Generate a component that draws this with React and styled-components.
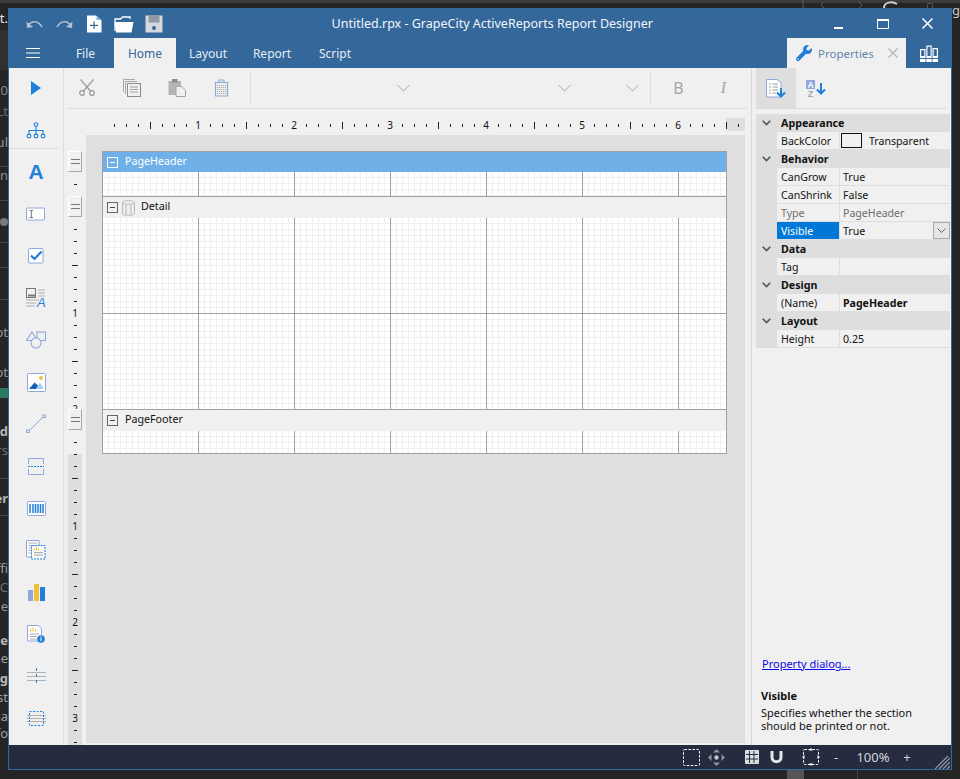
import React from 'react';
import styled, { createGlobalStyle } from 'styled-components';
import { FaWrench } from 'react-icons/fa';

const UI_FONT = '"Noto Sans", "Open Sans", sans-serif';

const Global = createGlobalStyle`
  html, body { margin: 0; padding: 0; background: #252525; }
  body { font-family: ${UI_FONT}; font-size: 11px; color: #111; }
  * { box-sizing: border-box; }
`;

const Desktop = styled.div`
  position: relative;
  width: 960px;
  height: 779px;
  overflow: hidden;
  padding: 8px;
  background: #252525;
`;

const BackdropStrip = styled.div`
  position: absolute;
  left: 0;
  right: 0;
  top: 0;
  height: 3px;
  background: #3b3b3b;
`;

const BackdropText = styled.span`
  position: absolute;
  top: ${p => p.$y}px;
  ${p => (p.$right ? 'left: 952px;' : 'right: 952px;')}
  font-size: 13px;
  line-height: 14px;
  font-weight: ${p => (p.$bold ? 700 : 400)};
  color: ${p => p.$color || '#8f8f8f'};
  white-space: nowrap;
`;

const BackdropHelp = styled.span`
  position: absolute;
  left: 0;
  top: 218px;
  width: 8px;
  height: 8px;
  border-radius: 50%;
  background: #7a7a7a;
`;

const BackdropLine = styled.i`
  position: absolute;
  left: 0;
  width: 8px;
  top: ${p => p.$y}px;
  height: ${p => p.$h || 1}px;
  background: ${p => p.$color || '#454545'};
`;

const BackdropBlock = styled.i`
  position: absolute;
  top: 770px;
  left: ${p => p.$x}px;
  width: ${p => p.$w}px;
  height: 9px;
  background: ${p => p.$color};
`;

const BackdropIcon = styled.svg`
  position: absolute;
  left: 800px;
  top: 0;
`;

const Window = styled.div`
  position: relative;
  display: flex;
  flex-direction: column;
  width: 944px;
  height: 762px;
  border: 1px solid #2c6aa5;
  background: #f0f0f0;
`;

const TitleBar = styled.div`
  display: flex;
  align-items: center;
  height: 29px;
  background: #34679a;
  color: #fff;
`;

const QuickGroup = styled.div`
  display: flex;
  align-items: center;
  width: 160px;
  padding-left: 11px;
`;

const QuickButton = styled.span`
  display: flex;
  justify-content: center;
  width: 30px;
`;

const Title = styled.div`
  flex: 1;
  text-align: center;
  font-size: 12.5px;
  padding-right: 1px;
  color: #f2f6fa;
`;

const WindowControls = styled.div`
  display: flex;
  padding-right: 1px;
`;

const WindowButton = styled.span`
  display: flex;
  align-items: center;
  justify-content: center;
  width: 44.5px;
  height: 29px;
`;

const TabRow = styled.div`
  display: flex;
  align-items: flex-end;
  height: 30px;
  background: #34679a;
`;

const MenuButton = styled.span`
  display: flex;
  align-items: center;
  justify-content: center;
  width: 48px;
  height: 30px;
`;

const Tab = styled.span`
  display: flex;
  align-items: center;
  justify-content: center;
  width: ${p => p.$w}px;
  height: 30px;
  font-size: 12px;
  color: ${p => (p.$active ? '#34679a' : '#e6edf4')};
  background: ${p => (p.$active ? '#f0f0f0' : 'transparent')};
`;

const TabSpacer = styled.span`
  flex: 1;
`;

const PropertiesTab = styled.span`
  flex: none;
  display: flex;
  align-items: center;
  width: 119px;
  height: 30px;
  padding-left: 9px;
  background: #f0f0f0;
  color: #5f87ae;
  font-size: 11.5px;
  gap: 6px;
`;

const TabClose = styled.svg`
  flex: none;
  margin-left: 8px;
`;

const ExplorerTab = styled.span`
  display: flex;
  align-items: center;
  justify-content: center;
  width: 45px;
  height: 30px;
`;

const Main = styled.div`
  flex: 1;
  display: flex;
  min-height: 0;
`;

const Toolbox = styled.div`
  flex: none;
  width: 55px;
  border-right: 1px solid #dcdcdc;
  display: flex;
  flex-direction: column;
  padding-top: 0;
  overflow: hidden;
`;

const ToolButton = styled.span`
  flex: none;
  display: flex;
  align-items: center;
  justify-content: center;
  height: 42px;
  width: 54px;

  &:first-child {
    margin-top: -1px;
  }
`;

const ToolLetter = styled.span`
  font-family: "Liberation Sans", sans-serif;
  font-weight: 700;
  font-size: 21px;
  line-height: 21px;
  color: #1e7fdc;
  margin-top: -1px;
`;

const ToolDivider = styled.hr`
  flex: none;
  width: 50px;
  height: 1px;
  border: 0;
  margin: -3px 0 2px 0;
  background: #dcdcdc;
`;

const Center = styled.div`
  flex: none;
  width: 688px;
  display: flex;
  flex-direction: column;
  border-right: 1px solid #d8d8d8;
`;

const Toolbar = styled.div`
  flex: none;
  display: flex;
  align-items: center;
  height: 41px;
  margin-left: 4px;
  margin-right: 4px;
  padding-bottom: 1px;
  border-bottom: 1px solid #dcdcdc;
`;

const ToolbarButton = styled.span`
  flex: none;
  display: flex;
  align-items: center;
  justify-content: center;
  width: ${p => p.$w || 45}px;
  height: 39px;
  margin-left: ${p => (p.$first ? -4 : 0)}px;
`;

const ToolbarSeparator = styled.i`
  flex: none;
  width: 1px;
  height: 32px;
  margin: 0 ${p => p.$r || 0}px 0 ${p => p.$l || 0}px;
  background: #dcdcdc;
`;

const Combo = styled.span`
  flex: none;
  display: flex;
  justify-content: flex-end;
  width: ${p => p.$w}px;
  padding-right: 3px;
`;

const HRuler = styled.div`
  flex: none;
  display: flex;
  align-items: center;
  height: 26px;
  padding-left: 44px;
  padding-top: 6px;
  background: linear-gradient(#dedede, #dedede) no-repeat 662px 9px / 19px 13px;
`;

const HCell = styled.span`
  flex: none;
  width: 12px;
  height: 14px;
  display: flex;
  align-items: center;
  justify-content: center;
  font-size: 10px;
  line-height: 14px;
  color: #111;
`;

const HTick = styled.i`
  width: 1px;
  height: ${p => (p.$major ? 7 : 3)}px;
  background: #222;
`;

const Workspace = styled.div`
  flex: 1;
  display: flex;
  min-height: 0;
  padding-left: 4px;
  padding-right: 6px;
  padding-bottom: 2px;
`;

const VRuler = styled.div`
  flex: none;
  width: 14px;
  padding-top: 16px;
  display: flex;
  flex-direction: column;
`;

const Handle = styled.div`
  position: relative;
  z-index: 1;
  flex: none;
  height: 21px;
  display: flex;
  flex-direction: column;
  align-items: center;
  justify-content: center;
  gap: 3px;
  background: #f0f0f0;
  border-top: 1px solid #fff;
  border-left: 1px solid #fff;
  border-right: 1px solid #a8a8a8;
  border-bottom: 1px solid #a8a8a8;

  &::before, &::after {
    content: "";
    width: 9px;
    height: 1px;
    background: #777;
  }
`;

const VSection = styled.div`
  flex: ${p => (p.$grow ? 1 : 'none')};
  height: ${p => (p.$grow ? 'auto' : `${p.$h}px`)};
  padding-top: 6px;
  background: ${p => (p.$grow ? 'linear-gradient(#f0f0f0 24px, #dedede 24px)' : 'none')};
`;

const VCell = styled.div`
  height: 12px;
  display: flex;
  align-items: center;
  justify-content: center;
  font-size: 10px;
  line-height: 12px;
`;

const VTick = styled.i`
  height: 1px;
  width: ${p => (p.$major ? 6 : 3)}px;
  background: #222;
`;

const Canvas = styled.div`
  flex: 1;
  margin-left: 4px;
  padding: 16px;
  background: #dfdfdf;
`;

const Surface = styled.div`
  width: 625px;
  border: 1px solid #a0a0a0;
  background: #fff;
`;

const SectionBar = styled.div`
  display: flex;
  align-items: center;
  height: ${p => (p.$selected ? 20 : 22)}px;
  padding-left: 4px;
  font-size: 10.7px;
  border-top: ${p => (p.$selected ? 'none' : '1px solid #a0a0a0')};
  background: ${p => (p.$selected ? '#6eb0e7' : '#f0f0f0')};
  color: ${p => (p.$selected ? '#fff' : '#111')};
`;

const SectionName = styled.span`
  margin-top: -3px;
`;

const Collapse = styled.span`
  position: relative;
  flex: none;
  width: 11px;
  height: 11px;
  margin-right: ${p => (p.$tight ? 4 : 7)}px;
  border: 1px solid ${p => (p.$selected ? '#fff' : '#666')};

  &::after {
    content: "";
    position: absolute;
    left: 2px;
    right: 2px;
    top: 4px;
    height: 1px;
    background: ${p => (p.$selected ? '#fff' : '#444')};
  }
`;

const SectionGrid = styled.div`
  height: ${p => p.$h}px;
  background-color: #fff;
  background-image:
    linear-gradient(90deg, transparent 95px, #a0a0a0 95px),
    linear-gradient(180deg, transparent 95px, #a0a0a0 95px),
    linear-gradient(90deg, transparent 5px, #f0f0f0 5px),
    linear-gradient(180deg, transparent 5px, #f0f0f0 5px);
  background-size: 96px 100%, 100% 96px, 6px 100%, 100% 6px;
`;

const Panel = styled.div`
  flex: 1;
  display: flex;
  flex-direction: column;
  padding-left: 4px;
  min-width: 0;
`;

const PanelToolbar = styled.div`
  flex: none;
  display: flex;
  width: 191px;
  height: 41px;
  border-bottom: 1px solid #dcdcdc;
`;

const PanelButton = styled.span`
  display: flex;
  align-items: center;
  justify-content: center;
  width: 40px;
  height: 40px;
  background: ${p => (p.$active ? '#dedede' : 'transparent')};
`;

const PropGrid = styled.div`
  margin-top: 5px;
  width: 194px;
`;

const CategoryRow = styled.div`
  display: grid;
  grid-template-columns: 21px 1fr;
  align-items: center;
  height: 18px;
  background: #dedede;
  font-weight: 700;
  font-size: 10.7px;
`;

const CategoryName = styled.span`
  padding-left: 4px;
  margin-top: -1px;
`;

const Chevron = styled.svg`
  display: block;
  margin: auto;
`;

const PropRow = styled.div`
  display: grid;
  grid-template-columns: 21px 62px 1fr;
  height: 18px;
  font-size: 10.6px;
  color: ${p => (p.$muted ? '#6d6d6d' : '#111')};
`;

const Gutter = styled.span`
  background: #dedede;
`;

const PropName = styled.span`
  display: flex;
  align-items: center;
  padding-left: 4px;
  border-bottom: 1px solid #dedede;
  background: ${p => (p.$selected ? '#0078d7' : 'transparent')};
  color: ${p => (p.$selected ? '#fff' : 'inherit')};
`;

const PropValue = styled.span`
  display: flex;
  align-items: center;
  padding-left: 3px;
  border-left: 1px solid #dedede;
  border-bottom: 1px solid #dedede;
  font-weight: ${p => (p.$bold ? 700 : 400)};
`;

const Swatch = styled.span`
  flex: none;
  width: 21px;
  height: 15px;
  margin-left: -2px;
  margin-right: 7px;
  border: 1px solid #111;
`;

const DropButton = styled.span`
  display: flex;
  align-items: center;
  justify-content: center;
  width: 17px;
  height: 17px;
  margin-left: auto;
  border: 1px solid #a8a8a8;
  background: #e6e6e6;
`;

const DialogLink = styled.a`
  margin: auto 0 0 6px;
  color: #0a0aee;
  text-decoration: underline;
  font-size: 11px;
  line-height: 15px;
`;

const HelpTitle = styled.div`
  margin: 17px 0 0 5px;
  font-weight: 700;
  font-size: 11px;
  line-height: 15px;
`;

const HelpText = styled.div`
  margin: 3px 0 13px 5px;
  width: 170px;
  font-size: 11px;
  line-height: 13px;
`;

const StatusBar = styled.div`
  flex: none;
  position: relative;
  display: flex;
  align-items: center;
  justify-content: flex-end;
  height: 24px;
  background: #252c40;
  color: #d4d6dc;
  font-size: 13px;
`;

const StatusItem = styled.span`
  flex: none;
  display: flex;
  align-items: center;
  justify-content: center;
  width: ${p => p.$w}px;
  margin-right: ${p => p.$gap || 0}px;
`;

const Grip = styled.svg`
  position: absolute;
  right: 1px;
  bottom: 0;
`;

const ToolGlyph = styled.span`
  font-family: ${p => (p.$italic ? '"Liberation Serif", serif' : UI_FONT)};
  font-style: ${p => (p.$italic ? 'italic' : 'normal')};
  font-size: 16px;
  line-height: 18px;
  color: #a6a6a6;
`;

const GRAY = '#9a9a9a';
const BLUE = '#1e7fdc';
const SOFT = '#8fa8dc';
const YELLOW = '#f2c037';

function UndoIcon({ flip }) {
  return (
    <svg width="17" height="10" viewBox="0 0 17 10" style={flip ? { transform: 'scaleX(-1)' } : undefined}>
      <path d="M2 7 C5 1.5 12 1 16 8" fill="none" stroke="#b0c3d7" strokeWidth="1.6" />
      <path d="M0.5 2.5 L1 9 L7 8 Z" fill="#b0c3d7" />
    </svg>
  );
}

function NewIcon() {
  return (
    <svg width="16" height="18" viewBox="0 0 16 18">
      <path d="M1 0.5 H10 L15.5 5.5 V17.5 H1 Z" fill="#fff" />
      <path d="M10.5 0.5 L15.5 5 H10.5 Z" fill="#8db4d9" />
      <path d="M8 6.5 V14 M4 10.3 H12" stroke="#34679a" strokeWidth="1.2" />
    </svg>
  );
}

function OpenIcon() {
  return (
    <svg width="20" height="18" viewBox="0 0 20 18">
      <path d="M1 16 V4 H6.5 L8.5 2 H16 V4" fill="none" stroke="#fff" strokeWidth="1.3" />
      <path d="M0.5 7 H19.5 L17.5 17.5 H2 Z" fill="#fff" />
    </svg>
  );
}

function SaveIcon() {
  return (
    <svg width="18" height="18" viewBox="0 0 18 18">
      <path d="M0.5 0.5 H17.5 V17.5 H0.5 Z" fill="#d5d8dc" />
      <rect x="3.5" y="0.5" width="11" height="7" fill="#8f98a3" />
      <circle cx="9" cy="13" r="2" fill="#34679a" />
    </svg>
  );
}

function MenuIcon() {
  return (
    <svg width="14" height="10" viewBox="0 0 14 10">
      <path d="M0 0.5 H14 M0 5 H14 M0 9.5 H14" stroke="#fff" strokeWidth="1" />
    </svg>
  );
}

function BooksIcon() {
  return (
    <svg width="18" height="17" viewBox="0 0 18 17">
      <path d="M0 4 H5.5 V17 H0 Z M6.3 0.5 H11.7 V17 H6.3 Z M12.5 3 H18 V17 H12.5 Z" fill="#fff" />
      <path d="M1.2 5.2 H4.3 V11 H1.2 Z M7.5 1.7 H10.5 V11 H7.5 Z M13.7 4.2 H16.8 V11 H13.7 Z" fill="#34679a" />
      <path d="M0 13.5 H18" stroke="#34679a" />
    </svg>
  );
}

function CutIcon() {
  return (
    <svg width="16" height="17" viewBox="0 0 16 17" fill="none" stroke={GRAY} strokeWidth="1.2">
      <circle cx="3" cy="14" r="2.3" />
      <circle cx="13" cy="14" r="2.3" />
      <path d="M4.5 12 L14.5 0.5 M11.5 12 L1.5 0.5" />
    </svg>
  );
}

function CopyIcon() {
  return (
    <svg width="18" height="18" viewBox="0 0 18 18" fill="none" stroke="#a8a8a8">
      <path d="M0.5 13 V0.5 H12" />
      <path d="M2.5 15 V2.5 H14" />
      <rect x="4.5" y="4.5" width="13" height="13" stroke="#8c8c8c" fill="#f0f0f0" />
      <path d="M7 8 H15 M7 10.5 H15 M7 13 H15" stroke="#a0a0a0" />
    </svg>
  );
}

function PasteIcon() {
  return (
    <svg width="18" height="19" viewBox="0 0 18 19">
      <path d="M0.5 3 H13 V17 H0.5 Z" fill="#b4b4b4" />
      <path d="M4 1 H9.5 V4.5 H4 Z" fill="#8c8c8c" />
      <path d="M8 8.5 H13.5 L17.5 12 V18.5 H8 Z" fill="#f0f0f0" stroke="#a4a4a4" />
    </svg>
  );
}

function TrashIcon() {
  return (
    <svg width="15" height="18" viewBox="0 0 15 18" fill="none" stroke={SOFT} strokeWidth="1.2">
      <path d="M0.5 3.5 H14.5 M5 3 V1 H10 V3" />
      <path d="M1.5 3.5 H13.5 V17 H1.5 Z" />
      <path d="M3.5 6 V15 M5.5 6 V15 M7.5 6 V15 M9.5 6 V15 M11.5 6 V15" stroke="#a9a9a9" strokeDasharray="1 1" />
    </svg>
  );
}

function ComboArrow() {
  return (
    <svg width="13" height="8" viewBox="0 0 13 8" fill="none" stroke="#c4c4c4" strokeWidth="1.1">
      <path d="M0.5 1 L6.5 7 L12.5 1" />
    </svg>
  );
}

function PlayIcon() {
  return (
    <svg width="10" height="14" viewBox="0 0 10 14"><path d="M0 0 L10 7 L0 14 Z" fill={BLUE} /></svg>
  );
}

function TreeIcon() {
  return (
    <svg width="20" height="17" viewBox="0 0 20 17" fill="none" stroke={BLUE} strokeWidth="1.1">
      <circle cx="10" cy="2.5" r="1.8" />
      <path d="M10 4.5 V8 M3 12 V8.5 H17 V12 M10 8 V12" />
      <circle cx="3" cy="14" r="1.9" />
      <circle cx="10" cy="14" r="1.9" />
      <circle cx="17" cy="14" r="1.9" />
    </svg>
  );
}

function TextBoxIcon() {
  return (
    <svg width="20" height="14" viewBox="0 0 20 14" fill="none">
      <rect x="0.5" y="1" width="18" height="12" rx="1" stroke={SOFT} fill="#fff" />
      <path d="M3.5 3.5 H7 M3.5 10.5 H7 M5.3 3.5 V10.5" stroke="#777" />
    </svg>
  );
}

function CheckIcon() {
  return (
    <svg width="16" height="16" viewBox="0 0 16 16" fill="none">
      <rect x="0.5" y="0.5" width="14.5" height="14.5" rx="1" stroke={SOFT} fill="#fff" />
      <path d="M3 7.5 L6.5 11 L13.5 3.5" stroke={BLUE} strokeWidth="2.2" />
    </svg>
  );
}

function RichTextIcon() {
  return (
    <svg width="20" height="20" viewBox="0 0 20 20" fill="none">
      <rect x="0.5" y="0.5" width="9" height="9" stroke="#777" />
      <path d="M2 7.5 H9" stroke="#777" strokeWidth="2" />
      <path d="M12 2 H19 M12 5 H19 M12 8 H19 M0 12 H13 M0 15 H10 M0 18 H9" stroke="#b0b0b0" />
      <text x="11" y="19" fontFamily="Liberation Sans" fontStyle="italic" fontSize="13" fill={BLUE}>A</text>
    </svg>
  );
}

function ShapesIcon() {
  return (
    <svg width="20" height="18" viewBox="0 0 20 18" fill="#f0f0f0" stroke={SOFT} strokeWidth="1.1">
      <rect x="11" y="1" width="8.5" height="8.5" />
      <path d="M6 1 L11 9.5 H0.5 Z" />
      <circle cx="10" cy="12" r="5" />
    </svg>
  );
}

function PictureIcon() {
  return (
    <svg width="19" height="19" viewBox="0 0 19 19">
      <rect x="0.5" y="0.5" width="18" height="18" rx="1" fill="#fff" stroke={SOFT} />
      <circle cx="14" cy="5" r="2" fill={YELLOW} />
      <path d="M9 16 L13 9.5 L17 16 Z" fill="#a9d0f2" />
      <path d="M2 16 L7.5 9.5 L11 12.5 L9 16 Z" fill="#1a5fb4" />
    </svg>
  );
}

function LineIcon() {
  return (
    <svg width="20" height="20" viewBox="0 0 20 20" fill="#f0f0f0" stroke={SOFT}>
      <path d="M2.5 17.5 L17.5 2.5" />
      <rect x="0.5" y="16" width="2.5" height="2.5" />
      <rect x="17" y="1" width="2.5" height="2.5" />
    </svg>
  );
}

function SectionIcon() {
  return (
    <svg width="16" height="17" viewBox="0 0 16 17" fill="none">
      <path d="M0.5 6 V0.5 H15.5 V6 M0.5 11 V16.5 H15.5 V11" stroke={SOFT} />
      <path d="M0 8.5 H16" stroke={BLUE} strokeDasharray="2 1" />
    </svg>
  );
}

function BarcodeIcon() {
  return (
    <svg width="19" height="15" viewBox="0 0 19 15" fill="none">
      <rect x="0.5" y="0.5" width="18" height="14" rx="1" stroke={SOFT} fill="#fff" />
      <path d="M3 3 V12 M6 3 V12 M8.5 3 V12 M11 3 V12 M13.5 3 V12 M16 3 V12" stroke={BLUE} strokeWidth="1.5" />
    </svg>
  );
}

function SubReportIcon() {
  return (
    <svg width="20" height="20" viewBox="0 0 20 20" fill="none">
      <path d="M0.5 0.5 H13 V17 H0.5 Z" stroke={SOFT} fill="#fff" />
      <path d="M2.5 3 H11 M2.5 5.5 H11 M2.5 8 H5 M2.5 10.5 H5 M2.5 13 H5" stroke="#b0b0b0" />
      <rect x="5.5" y="5.5" width="13.5" height="13.5" fill="#f8f8f8" stroke={BLUE} strokeDasharray="2 1" />
      <path d="M8.5 10.5 V8.5 M10.5 10.5 V7 M12.5 10.5 V8.5" stroke={YELLOW} />
      <path d="M8 12.5 H17 M8 15 H17" stroke="#a8a8a8" />
    </svg>
  );
}

function ChartIcon() {
  return (
    <svg width="17" height="17" viewBox="0 0 17 17">
      <rect x="0" y="6" width="5" height="11" fill={SOFT} />
      <rect x="6" y="0" width="5" height="17" fill={YELLOW} />
      <rect x="12" y="3" width="5" height="14" fill={BLUE} />
    </svg>
  );
}

function InfoIcon() {
  return (
    <svg width="18" height="18" viewBox="0 0 18 18" fill="none">
      <path d="M0.5 0.5 H11.5 L14.5 3.5 V16 H0.5 Z" stroke={SOFT} fill="#fff" />
      <path d="M3.5 6.5 V4 M6 6.5 V2.5 M8.5 6.5 V4" stroke={YELLOW} />
      <path d="M3 9 H12 M3 11.5 H10 M3 14 H10" stroke="#a8a8a8" />
      <circle cx="14" cy="14" r="3.8" fill={BLUE} />
      <path d="M14 12.5 V16 M14 11 V11.8" stroke="#fff" />
    </svg>
  );
}

function CrossIcon() {
  return (
    <svg width="19" height="17" viewBox="0 0 19 17" fill="none">
      <path d="M0 4.5 H19 M0 8.5 H19 M0 12.5 H19" stroke="#b0b0b0" />
      <path d="M9.5 0 V17" stroke={BLUE} strokeDasharray="3 3" />
    </svg>
  );
}

function BandIcon() {
  return (
    <svg width="19" height="15" viewBox="0 0 19 15" fill="none">
      <path d="M0 4.5 H19 M0 7.5 H19 M0 10.5 H19" stroke="#b0b0b0" />
      <rect x="2.5" y="0.5" width="14" height="14" stroke={BLUE} strokeDasharray="2 1.5" />
    </svg>
  );
}

function DbIcon() {
  return (
    <svg width="13" height="16" viewBox="0 0 13 16" fill="#ececec" stroke="#bcbcbc" style={{ marginRight: 6 }}>
      <path d="M0.5 2.5 C0.5 0 12.5 0 12.5 2.5 V13.5 C12.5 16 0.5 16 0.5 13.5 Z" />
      <path d="M0.5 2.5 C0.5 5 12.5 5 12.5 2.5 M4 4 V15 M9 4 V15" fill="none" />
    </svg>
  );
}

function SortCategoryIcon() {
  return (
    <svg width="20" height="19" viewBox="0 0 20 19" fill="none">
      <path d="M0.5 0.5 H11 L15 4 V18 H0.5 Z" stroke={SOFT} fill="#fff" />
      <path d="M3 5 H5 M6.5 5 H12 M3 8 H5 M6.5 8 H12 M3 11 H5 M6.5 11 H12 M3 14 H5 M6.5 14 H10" stroke="#9a9a9a" />
      <path d="M15 9 V17 M11 13.5 L15 17.5 L19 13.5" stroke={BLUE} strokeWidth="2" />
    </svg>
  );
}

function SortAlphaIcon() {
  return (
    <svg width="20" height="17" viewBox="0 0 20 17" fill="none">
      <rect x="0" y="0" width="9" height="9" fill={SOFT} />
      <text x="4.5" y="7.6" textAnchor="middle" fontFamily="Liberation Sans" fontWeight="700" fontSize="8.5" fill="#fff">A</text>
      <text x="4.5" y="16.5" textAnchor="middle" fontFamily="Liberation Sans" fontWeight="700" fontSize="9" fill="#a8a8a8">Z</text>
      <path d="M15 3 V13 M11 9.5 L15 13.5 L19 9.5" stroke={BLUE} strokeWidth="2" />
    </svg>
  );
}

function CategoryChevron() {
  return (
    <Chevron width="9" height="6" viewBox="0 0 9 6" fill="none" stroke="#555" strokeWidth="1.6">
      <path d="M0.7 0.8 L4.5 4.6 L8.3 0.8" />
    </Chevron>
  );
}

function MarqueeIcon() {
  return (
    <svg width="17" height="17" viewBox="0 0 17 17" fill="none" stroke="#fff">
      <rect x="0.5" y="0.5" width="16" height="16" rx="1" strokeDasharray="2.5 1.5" />
    </svg>
  );
}

function MoveIcon() {
  return (
    <svg width="17" height="17" viewBox="0 0 17 17" fill="#8e93a0">
      <path d="M8.5 0 L12 3.5 H5 Z M8.5 17 L12 13.5 H5 Z M0 8.5 L3.5 5 V12 Z M17 8.5 L13.5 5 V12 Z" />
      <circle cx="8.5" cy="8.5" r="2.2" fill="#c2c5cc" />
    </svg>
  );
}

function GridIcon() {
  return (
    <svg width="14" height="14" viewBox="0 0 14 14">
      <rect width="14" height="14" rx="1" fill="#dcdde0" />
      <path d="M4.5 1 V13 M9 1 V13 M1 4.5 H13 M1 9 H13" stroke="#252c40" />
    </svg>
  );
}

function MagnetIcon() {
  return (
    <svg width="13" height="13" viewBox="0 0 13 13" fill="none">
      <path d="M2 0 V6.5 C2 12 11 12 11 6.5 V0" stroke="#e4e5e8" strokeWidth="3" />
    </svg>
  );
}

function SnapIcon() {
  return (
    <svg width="18" height="18" viewBox="0 0 18 18" fill="#fff">
      <rect x="1.5" y="1.5" width="15" height="15" rx="1" fill="none" stroke="#fff" strokeDasharray="2.5 1.5" />
      <path d="M9 0 L11 2.5 H7 Z M9 18 L11 15.5 H7 Z M0 9 L2.5 7 V11 Z M18 9 L15.5 7 V11 Z" />
    </svg>
  );
}

function VerticalMarks({ from, to }) {
  const cells = [];
  for (let n = from; n <= to; n++) {
    cells.push(
      <VCell key={n}>{n % 8 === 0 ? n / 8 : <VTick $major={n % 4 === 0} />}</VCell>
    );
  }
  return cells;
}

const hMarks = Array.from({ length: 53 }, (_, i) => i + 1);

const leftNoise = [
  { y: 11, t: 't.', color: '#e6e6e6' },
  { y: 83, t: '20', color: '#8a8a8a' },
  { y: 104, t: 'Lt', color: '#6f6f6f' },
  { y: 135, t: 'ul', color: '#9a9a9a' },
  { y: 168, t: 'gn', color: '#8a8a8a' },
  { y: 325, t: 'ot', color: '#9a9a9a' },
  { y: 365, t: 'ot', color: '#9a9a9a' },
  { y: 424, t: 'd', color: '#b5b5b5', bold: true },
  { y: 443, t: 'rs', color: '#6f6f6f' },
  { y: 491, t: 'er', color: '#b5b5b5', bold: true },
  { y: 561, t: 'ffi', color: '#9a9a9a' },
  { y: 580, t: 'C', color: '#6f6f6f' },
  { y: 599, t: 'e', color: '#9a9a9a' },
  { y: 633, t: 'se', color: '#b8b8b8', bold: true },
  { y: 651, t: 'he', color: '#a0a0a0' },
  { y: 671, t: 'ng', color: '#b8b8b8', bold: true },
  { y: 690, t: 'st', color: '#a0a0a0' },
  { y: 709, t: 'ha', color: '#a0a0a0' },
  { y: 726, t: 'fo', color: '#a0a0a0' },
];

const leftLines = [166, 200, 242, 267, 299, 478, 515];

const properties = [
  { cat: 'Appearance', rows: [{ name: 'BackColor', value: 'Transparent', swatch: true }] },
  {
    cat: 'Behavior',
    rows: [
      { name: 'CanGrow', value: 'True' },
      { name: 'CanShrink', value: 'False' },
      { name: 'Type', value: 'PageHeader', muted: true },
      { name: 'Visible', value: 'True', selected: true },
    ],
  },
  { cat: 'Data', rows: [{ name: 'Tag', value: '' }] },
  { cat: 'Design', rows: [{ name: '(Name)', value: 'PageHeader', bold: true }] },
  { cat: 'Layout', rows: [{ name: 'Height', value: '0.25' }] },
];

export default function App() {
  return (
    <Desktop>
      <Global />
      <BackdropStrip />
      <BackdropLine $y={30} $h={40} $color="#2f3231" />
      {leftLines.map(y => <BackdropLine key={y} $y={y} />)}
      <BackdropLine $y={388} $h={10} $color="#2a7a60" />
      <BackdropHelp />
      {leftNoise.map(n => (
        <BackdropText key={n.y} $y={n.y} $color={n.color} $bold={n.bold}>{n.t}</BackdropText>
      ))}
      <BackdropText $right $y={3} $color="#c8c8c8">gr</BackdropText>
      <BackdropIcon width="160" height="8" viewBox="0 0 160 8" fill="none" stroke="#5a5a5a">
        <path d="M3 0 V8 M25 1 L21 5 L24 8 M58 1 L62 5 L59 8" />
        <path d="M84 8 C84 2 92 1 97 4" stroke="#cfcfcf" strokeWidth="2" />
        <circle cx="130" cy="6" r="3" />
      </BackdropIcon>
      <BackdropBlock $x={787} $w={17} $color="#555" />
      <BackdropBlock $x={857} $w={1} $color="#444" />

      <Window>
        <TitleBar>
          <QuickGroup>
            <QuickButton><UndoIcon /></QuickButton>
            <QuickButton><UndoIcon flip /></QuickButton>
            <QuickButton><NewIcon /></QuickButton>
            <QuickButton><OpenIcon /></QuickButton>
            <QuickButton><SaveIcon /></QuickButton>
          </QuickGroup>
          <Title>Untitled.rpx - GrapeCity ActiveReports Report Designer</Title>
          <WindowControls>
            <WindowButton>
              <svg width="9" height="10" viewBox="0 0 9 10"><rect y="8" width="9" height="2" fill="#fff" /></svg>
            </WindowButton>
            <WindowButton>
              <svg width="12" height="10" viewBox="0 0 12 10" fill="none" stroke="#fff"><path d="M0.5 1 H11.5 V9.5 H0.5 Z" /><path d="M0 1 H12" strokeWidth="2" /></svg>
            </WindowButton>
            <WindowButton>
              <svg width="11" height="11" viewBox="0 0 11 11" stroke="#fff" strokeWidth="1.5"><path d="M0.5 0.5 L10.5 10.5 M10.5 0.5 L0.5 10.5" /></svg>
            </WindowButton>
          </WindowControls>
        </TitleBar>
        <TabRow>
          <MenuButton><MenuIcon /></MenuButton>
          <Tab $w={57}>File</Tab>
          <Tab $w={62} $active>Home</Tab>
          <Tab $w={64}>Layout</Tab>
          <Tab $w={64}>Report</Tab>
          <Tab $w={62}>Script</Tab>
          <TabSpacer />
          <PropertiesTab>
            <FaWrench size={16} color={BLUE} />
            Properties
            <TabClose width="10" height="10" viewBox="0 0 10 10" stroke="#b4b4b4" strokeWidth="1.2">
              <path d="M0.5 0.5 L9.5 9.5 M9.5 0.5 L0.5 9.5" />
            </TabClose>
          </PropertiesTab>
          <ExplorerTab><BooksIcon /></ExplorerTab>
        </TabRow>
        <Main>
          <Toolbox>
            <ToolButton><PlayIcon /></ToolButton>
            <ToolButton><TreeIcon /></ToolButton>
            <ToolDivider />
            <ToolButton><ToolLetter>A</ToolLetter></ToolButton>
            <ToolButton><TextBoxIcon /></ToolButton>
            <ToolButton><CheckIcon /></ToolButton>
            <ToolButton><RichTextIcon /></ToolButton>
            <ToolButton><ShapesIcon /></ToolButton>
            <ToolButton><PictureIcon /></ToolButton>
            <ToolButton><LineIcon /></ToolButton>
            <ToolButton><SectionIcon /></ToolButton>
            <ToolButton><BarcodeIcon /></ToolButton>
            <ToolButton><SubReportIcon /></ToolButton>
            <ToolButton><ChartIcon /></ToolButton>
            <ToolButton><InfoIcon /></ToolButton>
            <ToolButton><CrossIcon /></ToolButton>
            <ToolButton><BandIcon /></ToolButton>
          </Toolbox>
          <Center>
            <Toolbar>
              <ToolbarButton $first><CutIcon /></ToolbarButton>
              <ToolbarButton><CopyIcon /></ToolbarButton>
              <ToolbarButton><PasteIcon /></ToolbarButton>
              <ToolbarButton><TrashIcon /></ToolbarButton>
              <ToolbarSeparator $l={6} />
              <Combo $w={162}><ComboArrow /></Combo>
              <Combo $w={161}><ComboArrow /></Combo>
              <Combo $w={68}><ComboArrow /></Combo>
              <ToolbarSeparator $l={8} $r={5} />
              <ToolbarButton><ToolGlyph>B</ToolGlyph></ToolbarButton>
              <ToolbarButton><ToolGlyph $italic>I</ToolGlyph></ToolbarButton>
            </Toolbar>
            <HRuler>
              {hMarks.map(n => (
                <HCell key={n}>{n % 8 === 0 ? n / 8 : <HTick $major={n % 4 === 0} />}</HCell>
              ))}
            </HRuler>
            <Workspace>
              <VRuler>
                <Handle />
                <VSection $h={24}><VerticalMarks from={1} to={1} /></VSection>
                <Handle />
                <VSection $h={192}><VerticalMarks from={1} to={16} /></VSection>
                <Handle />
                <VSection $grow><VerticalMarks from={1} to={26} /></VSection>
              </VRuler>
              <Canvas>
                <Surface>
                  <SectionBar $selected><Collapse $selected /><SectionName>PageHeader</SectionName></SectionBar>
                  <SectionGrid $h={24} />
                  <SectionBar><Collapse $tight /><DbIcon /><SectionName>Detail</SectionName></SectionBar>
                  <SectionGrid $h={191} />
                  <SectionBar><Collapse /><SectionName>PageFooter</SectionName></SectionBar>
                  <SectionGrid $h={22} />
                </Surface>
              </Canvas>
            </Workspace>
          </Center>
          <Panel>
            <PanelToolbar>
              <PanelButton $active><SortCategoryIcon /></PanelButton>
              <PanelButton><SortAlphaIcon /></PanelButton>
            </PanelToolbar>
            <PropGrid>
              {properties.map(group => (
                <React.Fragment key={group.cat}>
                  <CategoryRow>
                    <CategoryChevron />
                    <CategoryName>{group.cat}</CategoryName>
                  </CategoryRow>
                  {group.rows.map(row => (
                    <PropRow key={row.name} $muted={row.muted}>
                      <Gutter />
                      <PropName $selected={row.selected}>{row.name}</PropName>
                      <PropValue $bold={row.bold}>
                        {row.swatch && <Swatch />}
                        {row.value}
                        {row.selected && (
                          <DropButton>
                            <svg width="9" height="6" viewBox="0 0 9 6" fill="none" stroke="#666"><path d="M0.5 0.5 L4.5 4.5 L8.5 0.5" /></svg>
                          </DropButton>
                        )}
                      </PropValue>
                    </PropRow>
                  ))}
                </React.Fragment>
              ))}
            </PropGrid>
            <DialogLink>Property dialog...</DialogLink>
            <HelpTitle>Visible</HelpTitle>
            <HelpText>Specifies whether the section should be printed or not.</HelpText>
          </Panel>
        </Main>
        <StatusBar>
          <StatusItem $w={17} $gap={8}><MarqueeIcon /></StatusItem>
          <StatusItem $w={17} $gap={20}><MoveIcon /></StatusItem>
          <StatusItem $w={14} $gap={11}><GridIcon /></StatusItem>
          <StatusItem $w={13} $gap={19}><MagnetIcon /></StatusItem>
          <StatusItem $w={18} $gap={11}><SnapIcon /></StatusItem>
          <StatusItem $w={10} $gap={14}>-</StatusItem>
          <StatusItem $w={36} $gap={10}>100%</StatusItem>
          <StatusItem $w={12} $gap={38}>+</StatusItem>
          <Grip width="15" height="13" viewBox="0 0 15 13" stroke="#9a9ca6" strokeWidth="1.2">
            <path d="M0 13 L13 0 M4 13 L15 2 M8 13 L15 6 M12 13 L15 10" />
          </Grip>
        </StatusBar>
      </Window>
    </Desktop>
  );
}
